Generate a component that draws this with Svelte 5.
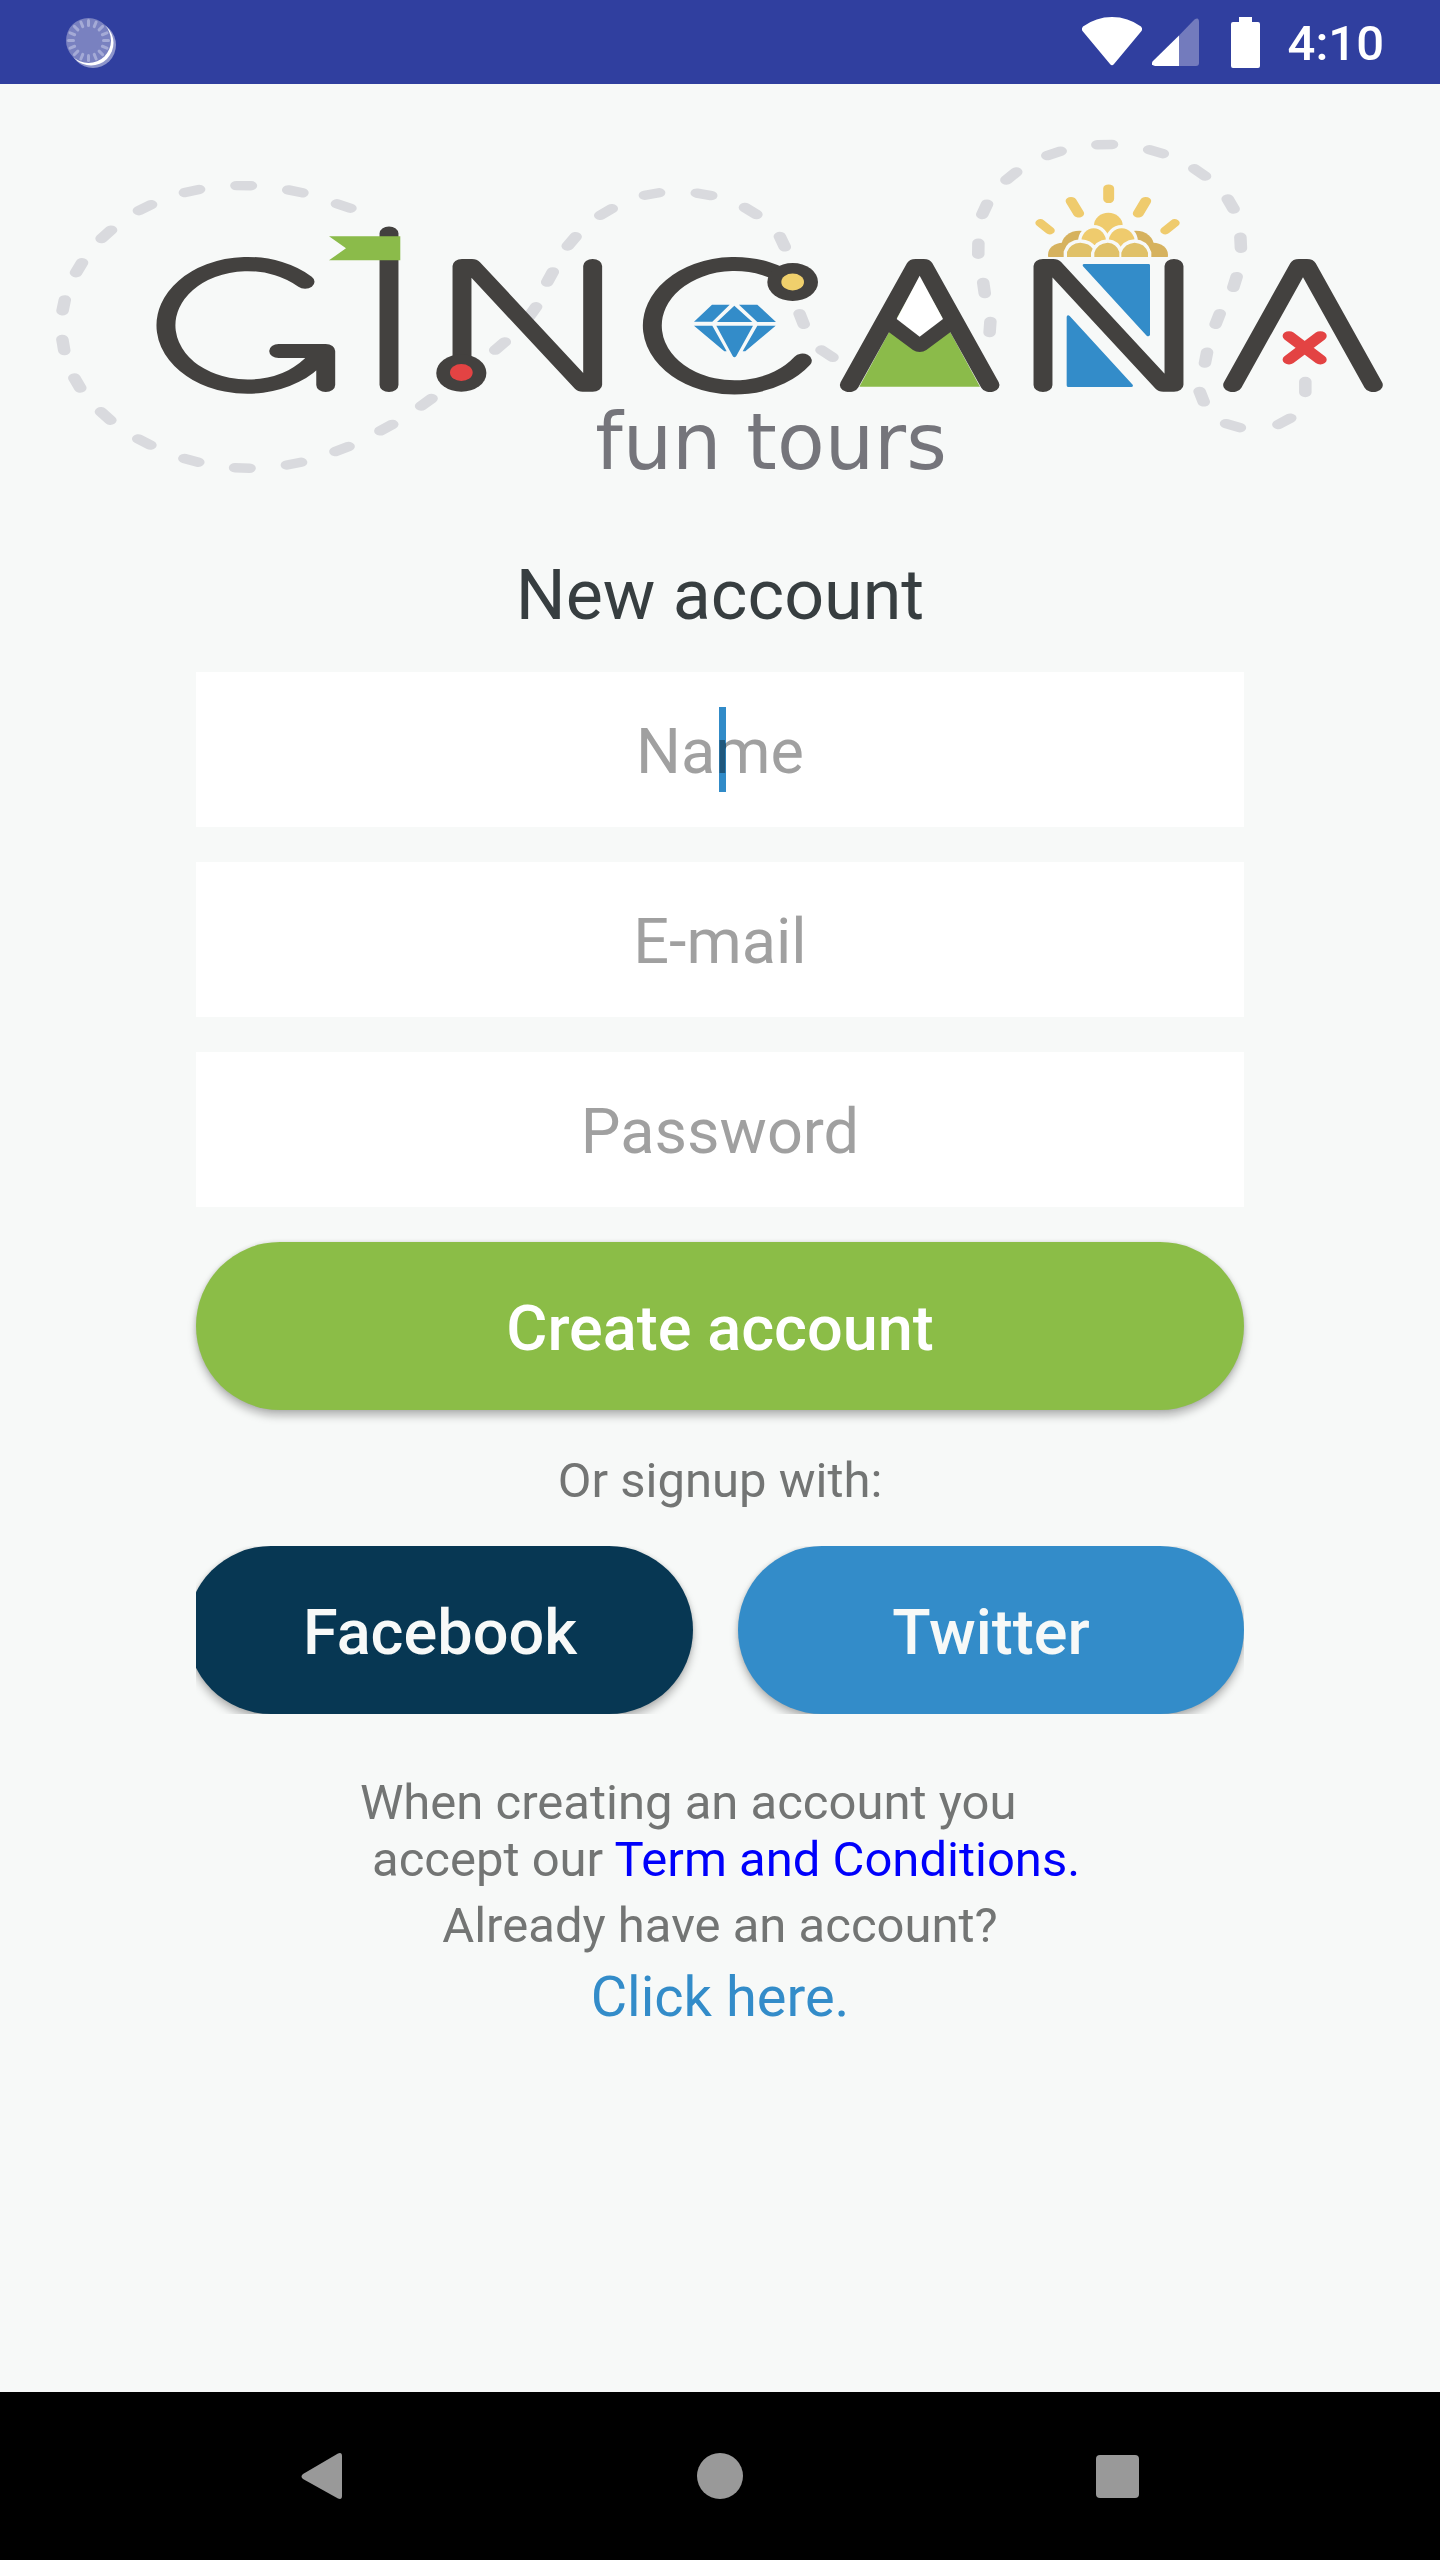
<script>
  // Dash centres of the two dotted trails; the first and last entry of each only steer the direction.
  const trails = [
    [
      [1040, 275], [911, 228], [766, 184], [611, 167], [456, 183], [315, 233], [199, 313],
      [117, 413], [71, 526], [70, 645], [112, 759], [197, 858], [313, 936], [454, 991],
      [607, 1014], [762, 1001], [906, 957], [1039, 893], [1159, 817], [1380, 648],
      [1478, 545], [1530, 441], [1595, 334], [1698, 246], [1836, 192], [1992, 193],
      [2132, 243], [2227, 335], [2285, 567], [2361, 671], [2560, 750]
    ],
    [
      [2812, 730], [2850, 591], [2832, 474], [2815, 356], [2834, 238], [2914, 138],
      [3042, 70], [3194, 44], [3348, 65], [3479, 127], [3572, 222], [3602, 338],
      [3585, 456], [3533, 567], [3498, 683], [3485, 800], [3579, 887], [3733, 874],
      [3796, 771], [3733, 660]
    ]
  ];

  const half = 5.5;
  const dashes = trails
    .flatMap((points) =>
      points.slice(1, -1).map((p, i) => {
        const a = points[i];
        const b = points[i + 2];
        const x = 30 + p[0] / 4;
        const y = 130 + p[1] / 3;
        let dx = (b[0] - a[0]) / 4;
        let dy = (b[1] - a[1]) / 3;
        const len = Math.hypot(dx, dy);
        dx = (dx / len) * half;
        dy = (dy / len) * half;
        return `M${(x - dx).toFixed(1)} ${(y - dy).toFixed(1)}L${(x + dx).toFixed(1)} ${(y + dy).toFixed(1)}`;
      })
    )
    .join('');

  const ticks = Array.from({ length: 16 }, (_, i) => i * 22.5);

  const frontCoins =
    'M411 390V366Q420 340 451 338Q479 340 488 356L483 368V390Z' +
    'M493 390V368Q502 340 533 338Q560 340 568 366V390Z' +
    'M574 390V368Q584 340 614 338Q645 340 654 368V390Z';

  let name = $state('');
  let email = $state('');
  let password = $state('');
</script>

<div class="screen">
  <header class="status">
    <svg class="spinner" viewBox="64 14 54 54" aria-hidden="true">
      <circle cx="93" cy="44" r="23" fill="#8d95cb" />
      <circle cx="91" cy="42" r="22.5" fill="#fff" />
      <circle cx="88.5" cy="39.5" r="22.5" fill="#7981c0" />
      <g stroke="#a4aad6" stroke-width="3" stroke-linecap="round">
        {#each ticks as angle}
          <path d="M88.5 19.5v5" transform="rotate({angle} 88.5 39.5)" />
        {/each}
      </g>
    </svg>
    <div class="indicators">
      <svg class="wifi" viewBox="0 0 60 50" aria-hidden="true">
        <path d="M1 9.500Q14 0 30 0T59 9.500Q61 12 59.500 14L32 47Q30 49.500 28 47L.5 14Q-1 12 1 9.500Z" fill="#fff" />
      </svg>
      <svg class="signal" viewBox="0 0 47 48" aria-hidden="true">
        <path d="M27 17.500L42.500 1.500Q47-1.500 47 4V45Q47 48 44 48H27Z" fill="#737bbd" />
        <path d="M27 17.500V48H3Q-1.500 47.500 .5 43.500Z" fill="#fff" />
      </svg>
      <svg class="battery" viewBox="0 0 29 51" aria-hidden="true">
        <path d="M8 0H21V5H27Q29 5 29 7V49Q29 51 27 51H2Q0 51 0 49V7Q0 5 2 5H8Z" fill="#fff" />
      </svg>
      <time>4:10</time>
    </div>
  </header>

  <main>
    <svg class="logo" viewBox="0 84 1440 470" role="img" aria-label="Gincana fun tours">
      <defs>
        <clipPath id="pile"><rect x="300" y="230" width="460" height="151" /></clipPath>
      </defs>
      <g transform="scale(1.33333 1)" fill="none" stroke-linecap="round">
        <path d={dashes} stroke="#d9dade" stroke-width="9.400" />
      </g>
      <g transform="translate(500 130) scale(.33333)">
        <path d="M1259 437L1440 770H1078Z" fill="#8bbb4a" />
        <path d="M636 524H689L637 575H582ZM703 527L757 576H651ZM717 524H772L828 576H772ZM582 587H637L680 664H673ZM649 587H759L709 678Q703 686 698 678ZM772 587H827L736 664H728Z" fill="#338cc9" />
      </g>
      <g transform="scale(1.33333 1)" fill="none" stroke="#43413f" stroke-width="14.200" stroke-linecap="round" stroke-linejoin="round">
        <path d="M228.800 281.700A61.300 61.300 0 1 0 237 359L243 352M209 351H244.300V385" />
        <path d="M291.750 233.500V385" />
        <path d="M346.500 373V266H354L437 384.700H444.500V266" />
        <path d="M594.500 282A61.700 61.700 0 1 0 601.750 360.700" />
        <path d="M666.250 321.700L689.750 345L713.250 321.700" />
        <path d="M637 385L686.750 266H692.750L742.500 385" />
        <path d="M782.250 385V266H790L872.500 384.700H880.500V266" />
        <path d="M924.500 385L974.250 266H980.250L1030 385" />
        <g stroke="none">
          <circle cx="346" cy="373" r="18.800" fill="#43413f" />
          <circle cx="346" cy="372.500" r="8.500" fill="#e34343" />
          <circle cx="594.500" cy="282" r="19" fill="#43413f" />
          <circle cx="594.500" cy="282" r="8.500" fill="#f0d06c" />
        </g>
        <path d="M966.750 336L990.250 359.700M990.250 336L966.750 359.700" stroke="#e34343" stroke-width="9.600" />
        <path d="M831.500 188.500V199M803.300 201L809 213.500M859.300 201L853.700 213.500" stroke="#efcb6d" stroke-width="8.200" />
        <path d="M780.300 223L787.300 230.500M881 223L874 230.500" stroke="#efcb6d" stroke-width="7.600" />
      </g>
      <path d="M329 236.300H400.300V260.300H329L346 248.300Z" fill="#8bbb4a" />
      <g transform="translate(500 130) scale(.33333)">
        <path d="M1259 437L1329 567L1259 620L1190 567Z" fill="#fff" />
      </g>
      <g transform="translate(930 130) scale(.33333)">
        <path d="M462 402H656Q660 402 660 406V615Q656 622 650 617L459 409Q456 403 462 402ZM410 766V560Q413 553 419 558L608 764Q611 770 604 771H414Q410 771 410 766Z" fill="#338cc9" />
        <g clip-path="url(#pile)">
          <g fill="#d6b25e">
            <ellipse cx="448" cy="348" rx="54" ry="46" />
            <ellipse cx="618" cy="348" rx="54" ry="46" />
            <ellipse cx="398" cy="374" rx="44" ry="36" />
            <ellipse cx="670" cy="374" rx="44" ry="36" />
          </g>
          <ellipse cx="535" cy="286" rx="43" ry="38" fill="#efcb6d" />
          <g fill="#f7f9f8" stroke="#f7f9f8" stroke-width="20">
            <ellipse cx="491" cy="335" rx="37" ry="40" />
            <ellipse cx="575" cy="335" rx="39" ry="40" />
          </g>
          <g fill="#efcb6d">
            <ellipse cx="491" cy="335" rx="37" ry="40" />
            <ellipse cx="575" cy="335" rx="39" ry="40" />
          </g>
          <path d={frontCoins} fill="#f7f9f8" stroke="#f7f9f8" stroke-width="20" />
          <path d={frontCoins} fill="#e0c168" />
        </g>
      </g>
      <text class="tagline" x="771" y="469" text-anchor="middle">fun tours</text>
    </svg>

    <h1>New account</h1>

    <form onsubmit={(e) => e.preventDefault()}>
      <div class="field">
        <input type="text" aria-label="Name" placeholder="Name" bind:value={name} />
        <span class="caret" aria-hidden="true"></span>
      </div>
      <div class="field">
        <input type="email" aria-label="E-mail" placeholder="E-mail" bind:value={email} />
      </div>
      <div class="field">
        <input type="password" aria-label="Password" placeholder="Password" bind:value={password} />
      </div>
      <button class="pill create" type="submit">Create account</button>
    </form>

    <p class="or">Or signup with:</p>
    <div class="social">
      <button class="pill facebook" type="button">Facebook</button>
      <button class="pill twitter" type="button">Twitter</button>
    </div>

    <p class="terms">When creating an account you<br />&nbsp;accept our <a href="#terms">Term and Conditions.</a></p>
    <p class="already">Already have an account?</p>
    <a class="login" href="#login">Click here.</a>
  </main>

  <nav>
    <button type="button" aria-label="Back">
      <svg viewBox="0 0 48 48" aria-hidden="true"><path d="M5 22L40 1.500Q44 0 44 4V44Q44 48 40 46.500L5 27Q2 24.500 5 22Z" /></svg>
    </button>
    <button type="button" aria-label="Home">
      <svg viewBox="0 0 48 48" aria-hidden="true"><circle cx="24" cy="24" r="23" /></svg>
    </button>
    <button type="button" aria-label="Recent apps">
      <svg viewBox="0 0 48 48" aria-hidden="true"><rect x="2" y="3" width="43" height="43" rx="4" /></svg>
    </button>
  </nav>
</div>

<style>
  :global(body) {
    background: #f7f9f8;
  }

  .screen {
    display: flex;
    flex-direction: column;
    min-height: 100vh;
    background: #f7f9f8;
    font-family: Roboto, sans-serif;
    color: #737574;
  }

  .status {
    display: flex;
    justify-content: space-between;
    align-items: center;
    height: 84px;
    padding: 0 56px 0 64px;
    background: #303f9f;
    color: #fff;
  }

  .spinner {
    width: 54px;
    height: 54px;
  }

  .indicators {
    display: flex;
    align-items: center;
  }

  .wifi {
    width: 60px;
    height: 50px;
    margin-right: 10px;
  }

  .signal {
    width: 47px;
    height: 48px;
    margin-right: 32px;
  }

  .battery {
    width: 29px;
    height: 51px;
    margin-right: 28px;
  }

  time {
    padding-top: 4px;
    font-size: 49px;
    line-height: 58px;
    font-weight: 500;
  }

  main {
    display: flex;
    flex-direction: column;
    align-items: center;
  }

  .logo {
    display: block;
    width: 100%;
  }

  .tagline {
    font-family: "DejaVu Sans", sans-serif;
    font-size: 78px;
    fill: #75757b;
  }

  h1 {
    margin: 0 0 36px;
    font-size: 70px;
    line-height: 82px;
    font-weight: 400;
    color: #373e40;
  }

  form,
  .social {
    box-sizing: border-box;
    width: 100%;
    max-width: 1048px;
  }

  form {
    display: flex;
    flex-direction: column;
    gap: 35px;
  }

  .field {
    position: relative;
    display: flex;
  }

  input {
    box-sizing: border-box;
    width: 100%;
    height: 155px;
    padding: 4px 24px 0;
    border: 0;
    border-radius: 0;
    outline: 0;
    background: #fff;
    font: 400 63px/74px Roboto, sans-serif;
    color: #373e40;
    text-align: center;
  }

  input::placeholder {
    color: #a0a0a0;
    opacity: 1;
  }

  .caret {
    position: absolute;
    top: 35px;
    bottom: 35px;
    left: calc(50% - 1px);
    width: 7px;
    background: #318bc8;
    mix-blend-mode: multiply;
  }

  .pill {
    flex: none;
    height: 168px;
    padding: 6px 0 0;
    border: 0;
    border-radius: 84px;
    font: 500 63px/74px Roboto, sans-serif;
    color: #f7f9f8;
    box-shadow: 0 6px 8px rgba(0, 0, 0, 0.26), 0 0 4px rgba(0, 0, 0, 0.12);
  }

  .create {
    background: #8bbd47;
    color: #fff;
  }

  .or {
    margin: 42px 0 36px;
    font-size: 49px;
    line-height: 58px;
  }

  .social {
    display: flex;
    justify-content: flex-end;
    gap: 45px;
    overflow: hidden;
  }

  .social .pill {
    width: 506px;
  }

  .facebook {
    background: #073753;
  }

  .twitter {
    background: #338cc9;
  }

  .terms {
    margin: 60px 0 0;
    font-size: 49px;
    line-height: 57px;
  }

  a {
    text-decoration: none;
  }

  .terms a {
    color: #0000fb;
  }

  .already {
    margin: 9px 0;
    font-size: 49px;
    line-height: 58px;
  }

  .login {
    font-size: 56px;
    line-height: 66px;
    color: #338cc9;
  }

  nav {
    display: flex;
    justify-content: center;
    height: 168px;
    margin-top: auto;
    background: #000;
  }

  nav button {
    display: flex;
    flex: 0 1 398px;
    align-items: center;
    justify-content: center;
    padding: 0;
    border: 0;
    background: none;
  }

  nav svg {
    width: 48px;
    height: 48px;
    fill: #999;
  }
</style>
